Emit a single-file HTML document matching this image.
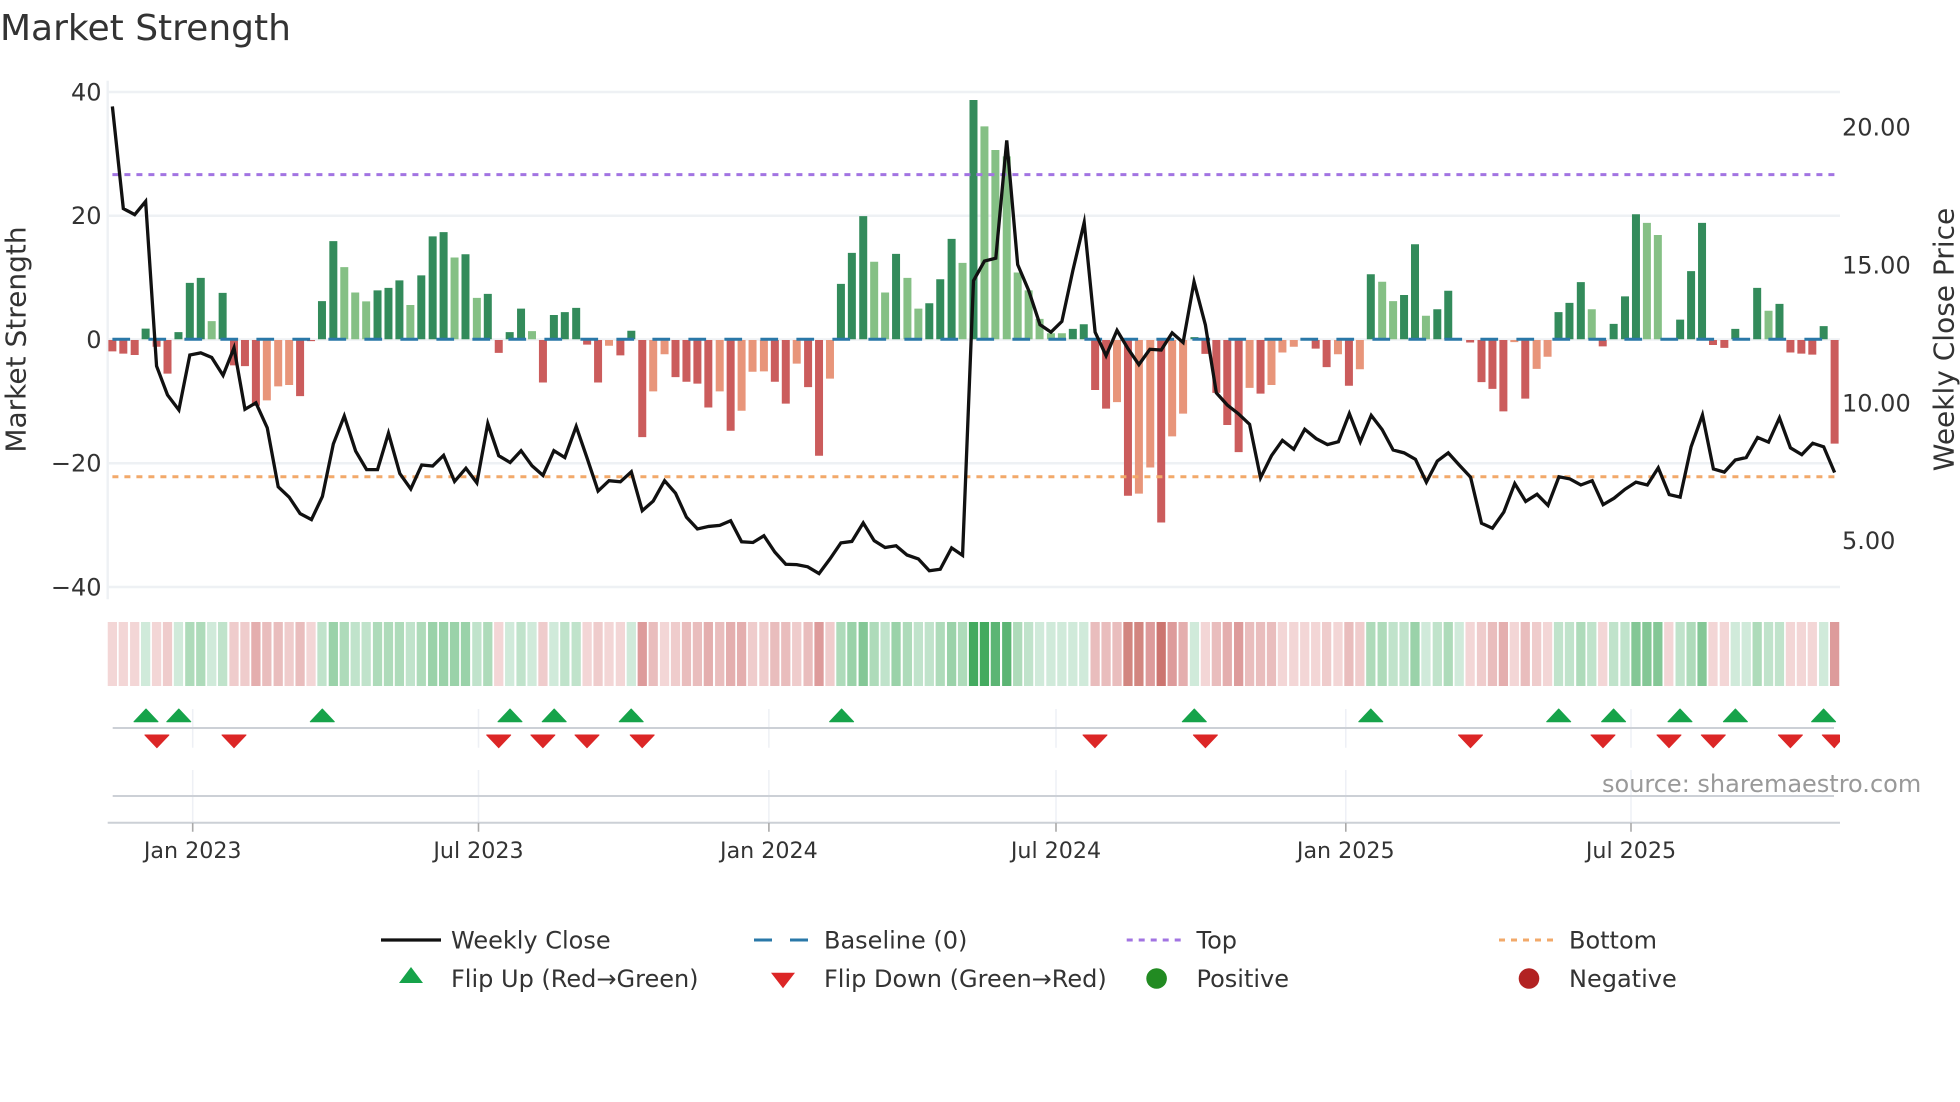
<!DOCTYPE html>
<html><head><meta charset="utf-8"><title>Market Strength</title>
<style>html,body{margin:0;padding:0;background:#fff}svg{display:block;font-family:"DejaVu Sans","Liberation Sans",sans-serif}</style>
</head><body>
<svg width="1960" height="1102" viewBox="0 0 1960 1102" xmlns="http://www.w3.org/2000/svg">
<rect width="1960" height="1102" fill="#fff"/>
<text x="0" y="40" font-size="36" fill="#333">Market Strength</text>
<!-- grid -->
<g stroke="#eef1f4" stroke-width="2.4" fill="none">
<path d="M107.7 92H1840M107.7 215.75H1840M107.7 339.5H1840M107.7 463.25H1840M107.7 587H1840M107.7 80.7V599.3"/>
</g>
<!-- bars -->
<g transform="translate(0 60) scale(.42088 .35714)" fill="none" stroke-width="19">
<path stroke="#338b5b" d="M346 782V752M424 782V762M451 782V624M477 782V610M529 782V652M765 782V675M792 782V507M897 782V645M923 782V638M949 782V617M1001 782V603M1028 782V494M1054 782V482M1106 782V544M1159 782V655M1211 782V762M1238 782V696M1316 782V714M1342 782V706M1369 782V694M1500 782V758M1998 782V627M2024 782V540M2051 782V437M2129 782V543M2208 782V681M2234 782V614M2261 782V501M2313 782V112M2549 782V753M2575 782V740M2838 782V776M3257 782V600M3336 782V658M3362 782V516M3415 782V698M3441 782V646M3703 782V706M3729 782V680M3756 782V622M3834 782V739M3861 782V662M3887 782V432M3992 782V727M4018 782V591M4044 782V456M4123 782V753M4175 782V638M4228 782V683M4333 782V745"/>
<path stroke="#85c085" d="M503 782V731M818 782V580M844 782V651M870 782V676M975 782V686M1080 782V553M1133 782V666M1264 782V759M2077 782V565M2103 782V651M2156 782V610M2182 782V696M2287 782V568M2339 782V186M2365 782V252M2392 782V270M2418 782V595M2444 782V645M2470 782V725M2497 782V765M2523 782V765M3284 782V621M3310 782V675M3388 782V716M3782 782V698M3913 782V456M3939 782V490M4202 782V702"/>
<path stroke="#cb5c5c" d="M267 784V816M293 784V822M320 784V826M372 784V803M398 784V878M556 784V855M582 784V857M608 784V968M713 784V941M739 784V787M1185 784V820M1290 784V903M1395 784V797M1421 784V903M1474 784V827M1526 784V1056M1605 784V888M1631 784V901M1657 784V906M1683 784V973M1736 784V1038M1841 784V901M1867 784V962M1920 784V916M1946 784V1108M2602 784V924M2628 784V976M2680 784V1220M2759 784V1295M2864 784V823M2890 784V932M2916 784V1022M2943 784V1098M2995 784V934M3126 784V808M3152 784V860M3205 784V912M3493 784V791M3520 784V902M3546 784V921M3572 784V984M3624 784V948M3808 784V802M4070 784V798M4097 784V806M4254 784V819M4280 784V822M4306 784V825M4359 784V1074"/>
<path stroke="#e8957a" d="M634 784V953M661 784V914M687 784V910M1447 784V800M1552 784V928M1579 784V824M1710 784V928M1762 784V982M1788 784V873M1815 784V872M1893 784V850M1972 784V892M2654 784V958M2706 784V1214M2733 784V1141M2785 784V1054M2811 784V990M2969 784V918M3021 784V910M3047 784V819M3074 784V803M3179 784V824M3231 784V866M3598 784V790M3651 784V865M3677 784V831"/>
</g>
<!-- reference lines -->
<path d="M112.4 339.3H1834.6" stroke="#2a78a8" stroke-width="3" stroke-dasharray="17.7 18.3" fill="none"/>
<path d="M112.4 174.6H1834.6" stroke="#a274e2" stroke-width="3" stroke-dasharray="6 6" fill="none"/>
<path d="M112.4 476.8H1834.6" stroke="#f2a96a" stroke-width="3" stroke-dasharray="6 6" fill="none"/>
<!-- price line -->
<g transform="translate(0 60) scale(.42088 .35714)">
<path vector-effect="non-scaling-stroke" fill="none" stroke="#111" stroke-width="3.3" stroke-linejoin="miter" stroke-miterlimit="8" d="M267 130L293 416 320 433 346 396 372 857 398 938 425 980 451 826 477 820 503 833 530 883 556 806 582 978 608 960 635 1030 661 1195 687 1224 713 1270 740 1287 766 1222 792 1075 818 997 845 1095 871 1147 897 1147 923 1045 950 1158 976 1201 1002 1134 1028 1137 1054 1107 1080 1180 1107 1143 1133 1184 1159 1018 1185 1108 1212 1127 1238 1094 1264 1136 1290 1163 1316 1094 1342 1113 1369 1026 1395 1115 1421 1207 1447 1178 1474 1181 1500 1153 1526 1262 1552 1235 1579 1178 1605 1213 1631 1280 1657 1313 1684 1306 1710 1303 1736 1290 1762 1349 1789 1351 1815 1332 1841 1378 1867 1412 1893 1413 1919 1419 1946 1438 1972 1397 1998 1352 2024 1348 2051 1296 2077 1346 2103 1365 2129 1360 2155 1386 2182 1397 2208 1430 2234 1426 2261 1366 2287 1387 2313 618 2339 563 2366 555 2392 225 2418 573 2444 645 2471 741 2497 762 2523 732 2549 590 2576 455 2602 762 2628 828 2654 757 2680 808 2706 853 2732 810 2759 812 2785 764 2811 791 2837 621 2864 742 2890 932 2916 966 2942 990 2969 1020 2995 1170 3021 1108 3047 1065 3074 1090 3100 1034 3127 1060 3154 1077 3180 1069 3206 990 3232 1069 3258 995 3284 1035 3310 1092 3336 1100 3363 1118 3389 1182 3415 1123 3441 1100 3467 1134 3494 1168 3520 1297 3546 1311 3573 1266 3599 1186 3625 1236 3652 1216 3678 1247 3704 1167 3730 1173 3756 1190 3783 1178 3809 1245 3835 1227 3861 1202 3887 1182 3914 1190 3940 1142 3966 1217 3992 1224 4018 1083 4045 994 4071 1145 4097 1154 4123 1120 4149 1113 4176 1057 4202 1070 4228 1002 4254 1086 4281 1105 4307 1073 4333 1083 4359 1155"/>
</g>
<!-- heat strip -->
<g transform="translate(0 622) scale(.42088 1)" fill="none" stroke-width="22">
<path stroke="#d0eada" d="M346 0V64M424 0V64M503 0V64M1211 0V64M1264 0V64M1316 0V64M1500 0V64M2470 0V64M2497 0V64M2523 0V64M2549 0V64M2575 0V64M2838 0V64M3388 0V64M3467 0V64M4123 0V64M4149 0V64M4333 0V64"/>
<path stroke="#c0e3cb" d="M529 0V64M765 0V64M844 0V64M870 0V64M975 0V64M1133 0V64M1238 0V64M1342 0V64M1369 0V64M2103 0V64M2182 0V64M2208 0V64M2444 0V64M3310 0V64M3336 0V64M3415 0V64M3703 0V64M3729 0V64M3782 0V64M3834 0V64M3861 0V64M3992 0V64M4202 0V64M4228 0V64"/>
<path stroke="#aedbba" d="M451 0V64M477 0V64M818 0V64M897 0V64M923 0V64M949 0V64M1001 0V64M1159 0V64M1998 0V64M2077 0V64M2156 0V64M2234 0V64M2287 0V64M2418 0V64M3257 0V64M3284 0V64M3441 0V64M3756 0V64M4018 0V64M4175 0V64"/>
<path stroke="#9ad2a9" d="M792 0V64M1028 0V64M1054 0V64M1080 0V64M1106 0V64M2024 0V64M2129 0V64M2261 0V64M3362 0V64"/>
<path stroke="#84c796" d="M2051 0V64M3887 0V64M3913 0V64M3939 0V64M4044 0V64"/>
<path stroke="#5cb574" d="M2365 0V64M2392 0V64"/>
<path stroke="#43aa5f" d="M2313 0V64M2339 0V64"/>
<path stroke="#f3d6d6" d="M267 0V64M293 0V64M320 0V64M372 0V64M739 0V64M1185 0V64M1395 0V64M1447 0V64M1474 0V64M1579 0V64M2864 0V64M3047 0V64M3074 0V64M3100 0V64M3126 0V64M3179 0V64M3493 0V64M3598 0V64M3677 0V64M3808 0V64M3965 0V64M4070 0V64M4097 0V64M4254 0V64M4280 0V64M4306 0V64"/>
<path stroke="#efcccc" d="M398 0V64M556 0V64M582 0V64M687 0V64M1290 0V64M1421 0V64M1605 0V64M1788 0V64M1815 0V64M1893 0V64M1972 0V64M3152 0V64M3231 0V64M3520 0V64M3651 0V64"/>
<path stroke="#e9bdbd" d="M634 0V64M661 0V64M713 0V64M1552 0V64M1631 0V64M1657 0V64M1710 0V64M1841 0V64M1867 0V64M1920 0V64M2602 0V64M2628 0V64M2654 0V64M2890 0V64M2969 0V64M2995 0V64M3021 0V64M3205 0V64M3546 0V64M3624 0V64"/>
<path stroke="#e4aeae" d="M608 0V64M1683 0V64M1736 0V64M1762 0V64M2811 0V64M2916 0V64M3572 0V64"/>
<path stroke="#dd9b9b" d="M1526 0V64M1946 0V64M2733 0V64M2785 0V64M2943 0V64M4359 0V64"/>
<path stroke="#d28680" d="M2680 0V64M2706 0V64"/>
<path stroke="#cc7570" d="M2759 0V64"/>
</g>
<!-- lower panel grid -->
<g fill="none" stroke="#eef0f5" stroke-width="1.5">
<path d="M192.7 709V747.7M478.5 709V747.7M768.9 709V747.7M1056 709V747.7M1345.8 709V747.7M1631 709V747.7M192.7 770V822M478.5 770V822M768.9 770V822M1056 770V822M1345.8 770V822M1631 770V822"/>
</g>
<g fill="none" stroke="#ccd0d6" stroke-width="2">
<path d="M112.7 728H1834M112.7 796H1834M107.7 822.7H1840"/>
</g>
<path d="M192.7 823V831.7M478.5 823V831.7M768.9 823V831.7M1056 823V831.7M1345.8 823V831.7M1631 823V831.7" stroke="#aaa" stroke-width="1.6" fill="none"/>
<!-- flips -->
<path fill="#16a34a" stroke="#16a34a" stroke-width="1" stroke-linejoin="round" d="M134 721.7h24l-12-12.7zM166.8 721.7h24l-12-12.7zM310.3 721.7h24l-12-12.7zM498 721.7h24l-12-12.7zM542.2 721.7h24l-12-12.7zM619.2 721.7h24l-12-12.7zM829.6 721.7h24l-12-12.7zM1182.3 721.7h24l-12-12.7zM1358.8 721.7h24l-12-12.7zM1546.7 721.7h24l-12-12.7zM1601.6 721.7h24l-12-12.7zM1668 721.7h24l-12-12.7zM1723.4 721.7h24l-12-12.7zM1811.6 721.7h24l-12-12.7z"/>
<path fill="#dc2626" stroke="#dc2626" stroke-width="1" stroke-linejoin="round" d="M144.9 735h24l-12 12.7zM222 735h24l-12 12.7zM486.7 735h24l-12 12.7zM530.9 735h24l-12 12.7zM575 735h24l-12 12.7zM630.2 735h24l-12 12.7zM1083 735h24l-12 12.7zM1193.4 735h24l-12 12.7zM1458.5 735h24l-12 12.7zM1591 735h24l-12 12.7zM1657 735h24l-12 12.7zM1701.3 735h24l-12 12.7zM1778.4 735h24l-12 12.7zM1822.3 735H1839.5V741.7L1834.3 747.7z"/>
<!-- y tick labels -->
<g font-size="24" fill="#333" text-anchor="end">
<text x="101.5" y="100.5">40</text>
<text x="101.5" y="224">20</text>
<text x="101.5" y="348">0</text>
<text x="101.5" y="471.5">−20</text>
<text x="101.5" y="595.5">−40</text>
</g>
<g font-size="24" fill="#333">
<text x="1842" y="135.7">20.00</text>
<text x="1842" y="273.5">15.00</text>
<text x="1842" y="411.5">10.00</text>
<text x="1842" y="549">5.00</text>
</g>
<text transform="translate(25.4 339.5) rotate(-90)" font-size="28" fill="#333" text-anchor="middle">Market Strength</text>
<text transform="translate(1953.5 339.5) rotate(-90)" font-size="28" fill="#333" text-anchor="middle">Weekly Close Price</text>
<!-- x tick labels -->
<g font-size="22.2" fill="#333" text-anchor="middle">
<text x="192.7" y="858">Jan 2023</text>
<text x="478.5" y="858">Jul 2023</text>
<text x="768.9" y="858">Jan 2024</text>
<text x="1056" y="858">Jul 2024</text>
<text x="1345.8" y="858">Jan 2025</text>
<text x="1631" y="858">Jul 2025</text>
</g>
<text x="1602" y="792" font-size="24" fill="#999">source: sharemaestro.com</text>
<!-- legend -->
<path d="M381 940H441" stroke="#111" stroke-width="3.3" fill="none"/>
<path d="M754 940H772M790 940H808" stroke="#2a78a8" stroke-width="3" fill="none"/>
<path d="M1126.7 940H1182" stroke="#a274e2" stroke-width="3" stroke-dasharray="6 6" fill="none"/>
<path d="M1499 940H1554" stroke="#f2a96a" stroke-width="3" stroke-dasharray="6 6" fill="none"/>
<path d="M399 983h24l-12-16z" fill="#16a34a"/>
<path d="M771 972.7h24l-12 15.5z" fill="#dc2626"/>
<circle cx="1156.6" cy="978.5" r="10.3" fill="#228b22"/>
<circle cx="1529" cy="978.5" r="10.3" fill="#b22222"/>
<g font-size="24" fill="#333">
<text x="451" y="948.5">Weekly Close</text>
<text x="824" y="948.5">Baseline (0)</text>
<text x="1196.5" y="948.5">Top</text>
<text x="1569" y="948.5">Bottom</text>
<text x="451" y="987">Flip Up (Red→Green)</text>
<text x="824" y="987">Flip Down (Green→Red)</text>
<text x="1196.5" y="987">Positive</text>
<text x="1569" y="987">Negative</text>
</g>
</svg>
</body></html>
